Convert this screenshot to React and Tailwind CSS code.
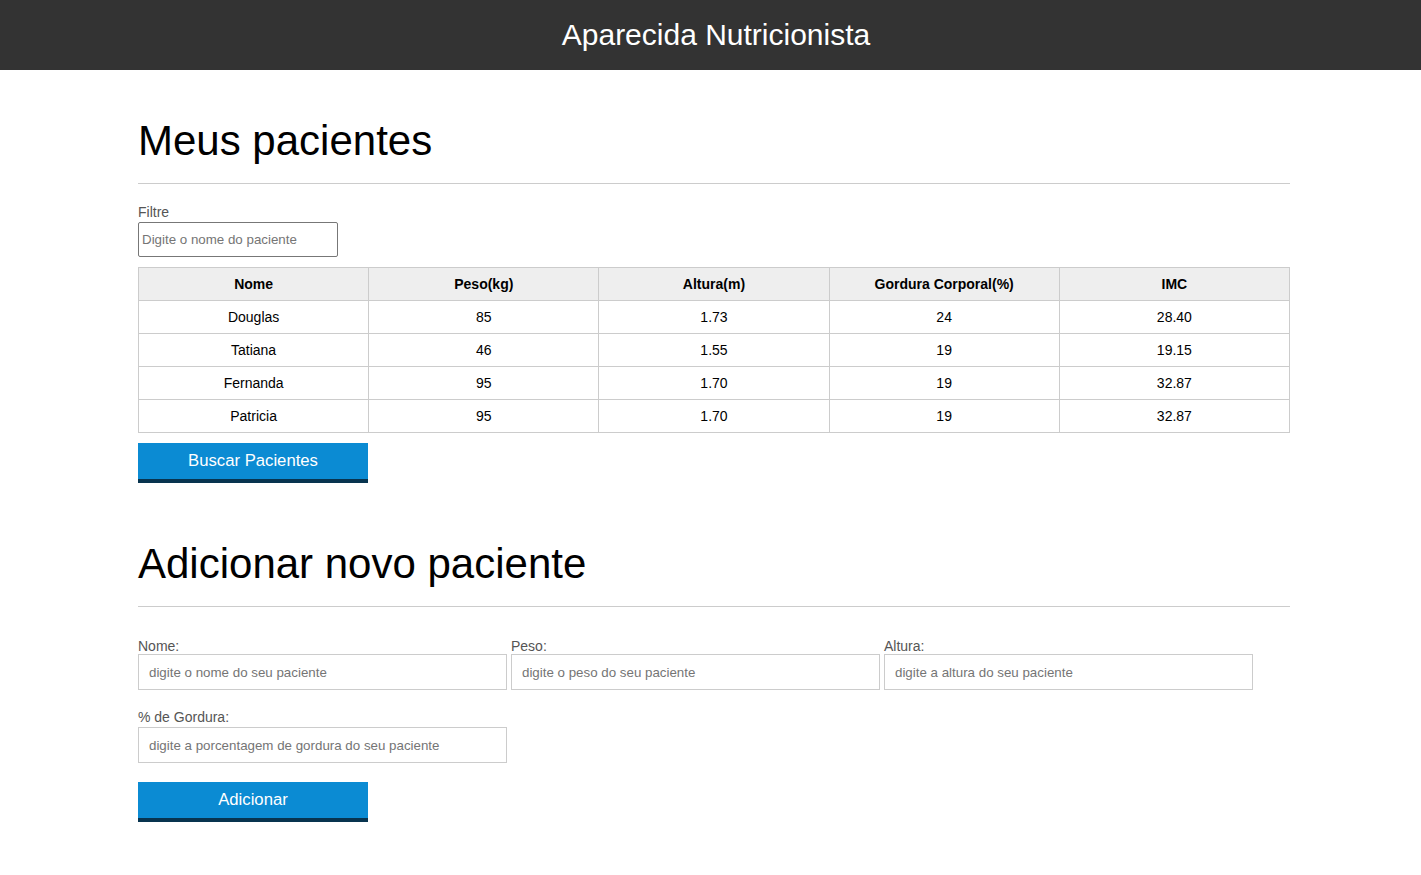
const pacientes = [
  { nome: 'Douglas', peso: '85', altura: '1.73', gordura: '24', imc: '28.40' },
  { nome: 'Tatiana', peso: '46', altura: '1.55', gordura: '19', imc: '19.15' },
  { nome: 'Fernanda', peso: '95', altura: '1.70', gordura: '19', imc: '32.87' },
  { nome: 'Patricia', peso: '95', altura: '1.70', gordura: '19', imc: '32.87' },
];

const font = { fontFamily: '"Liberation Sans", Arial, sans-serif' };

function Campo({ label, placeholder, extra = '' }) {
  return (
    <div className="w-[369px] flex flex-col">
      <label className={`text-[14px] leading-[15px] text-[#555] ${extra}`}>{label}</label>
      <input
        className="h-[36px] border border-[#ccc] px-[10px] text-[13.33px] placeholder:text-[#757575] outline-none"
        placeholder={placeholder}
      />
    </div>
  );
}

export default function App() {
  return (
    <div style={font} className="min-h-screen bg-white text-black">
      <header className="h-[70px] bg-[#333] flex items-center justify-center pl-[11px]">
        <h1 className="text-white text-[30px] leading-none">Aparecida Nutricionista</h1>
      </header>

      <main className="w-[1152px] ml-[138px]">
        <section className="pt-[47px]">
          <h2 className="text-[42px] leading-[48px]">Meus pacientes</h2>
          <hr className="mt-[18px] border-t border-[#ccc]" />

          <div className="mt-[20px] flex flex-col">
            <label className="text-[14px] leading-[16px] text-[#555]">Filtre</label>
            <input
              className="mt-[2px] w-[200px] h-[35px] border border-[#777] rounded-[2px] px-[3px] text-[13.33px] placeholder:text-[#757575] outline-none"
              placeholder="Digite o nome do paciente"
            />
          </div>

          <table className="mt-[10px] w-full border-collapse text-[14px]">
            <thead>
              <tr className="bg-[#eee]">
                {['Nome', 'Peso(kg)', 'Altura(m)', 'Gordura Corporal(%)', 'IMC'].map((h) => (
                  <th key={h} className="w-1/5 h-[33px] border border-[#ccc] font-bold">
                    {h}
                  </th>
                ))}
              </tr>
            </thead>
            <tbody>
              {pacientes.map((p) => (
                <tr key={p.nome}>
                  {[p.nome, p.peso, p.altura, p.gordura, p.imc].map((v, i) => (
                    <td key={i} className="h-[33px] border border-[#ccc] text-center">
                      {v}
                    </td>
                  ))}
                </tr>
              ))}
            </tbody>
          </table>

          <button className="mt-[10px] w-[230px] h-[40px] bg-[#0b8bd3] border-b-[4px] border-[#08344f] text-white text-[16.7px]">
            Buscar Pacientes
          </button>
        </section>

        <section className="pt-[57px] pb-[50px]">
          <h2 className="text-[42px] leading-[48px]">Adicionar novo paciente</h2>
          <hr className="mt-[18px] border-t border-[#ccc]" />

          <div className="mt-[32px] flex gap-[4px]">
            <Campo label="Nome:" placeholder="digite o nome do seu paciente" />
            <Campo label="Peso:" placeholder="digite o peso do seu paciente" />
            <Campo label="Altura:" placeholder="digite a altura do seu paciente" />
          </div>
          <div className="mt-[20px] flex">
            <Campo label="% de Gordura:" extra="mb-[2px]" placeholder="digite a porcentagem de gordura do seu paciente" />
          </div>

          <button className="mt-[19px] w-[230px] h-[40px] bg-[#0b8bd3] border-b-[4px] border-[#08344f] text-white text-[16.7px]">
            Adicionar
          </button>
        </section>
      </main>
    </div>
  );
}
